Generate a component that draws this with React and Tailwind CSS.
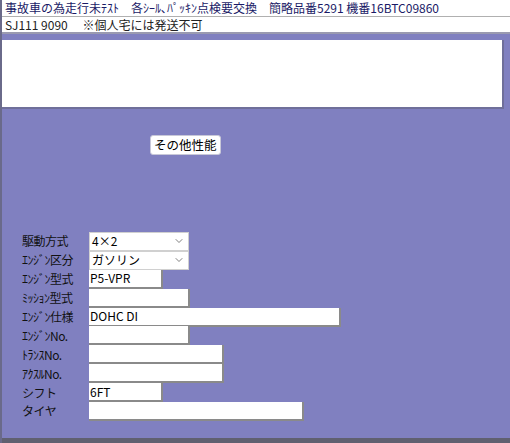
import React from "react";
import { ChevronDown } from "lucide-react";

const font = { fontFamily: '"MS Gothic", "Noto Sans CJK JP", sans-serif' };

const fields = [
  { label: "駆動方式", type: "select", value: "4×2", w: "w-[100px]" },
  { label: "ｴﾝｼﾞﾝ区分", type: "select", value: "ガソリン", w: "w-[100px]" },
  { label: "ｴﾝｼﾞﾝ型式", value: "P5-VPR", w: "w-[74px]" },
  { label: "ﾐｯｼｮﾝ型式", value: "", w: "w-[101px]" },
  { label: "ｴﾝｼﾞﾝ仕様", value: "DOHC DI", w: "w-[252px]" },
  { label: "ｴﾝｼﾞﾝNo.", value: "", w: "w-[101px]" },
  { label: "ﾄﾗﾝｽNo.", value: "", w: "w-[135px]" },
  { label: "ｱｸｽﾙNo.", value: "", w: "w-[135px]" },
  { label: "シフト", value: "6FT", w: "w-[74px]" },
  { label: "タイヤ", value: "", w: "w-[215px]" },
];

const App = () => {
  return (
    <div
      className="w-[510px] h-[443px] bg-[#8080c0] border-l-2 border-[#6a6a8a] text-[12px] flex flex-col overflow-hidden"
      style={font}
    >
      {/* ヘッダー */}
      <div className="bg-white">
        <div className="h-[17px] px-[3px] flex items-center text-[#1a1a66] border-b border-[#b0b0b0] whitespace-nowrap">
          事故車の為走行未ﾃｽﾄ　各ｼｰﾙ､ﾊﾟｯｷﾝ点検要交換　簡略品番5291 機番16BTC09860
        </div>
        <div className="h-[17px] px-[3px] flex items-center text-[#222] border-b-2 border-[#9a9ab0] whitespace-nowrap">
          SJ111 9090　 ※個人宅には発送不可
        </div>
      </div>

      {/* テキストエリア */}
      <div className="mt-[6px] mr-[6px] h-[69px] bg-white border-b-2 border-r-2 border-[#6f6f9a]"></div>

      {/* ボタン */}
      <div className="pl-[148px] mt-[26px]">
        <button className="h-[20px] px-[3px] bg-white rounded-[3px] border border-[#c8c8d8] text-[12.5px] text-black leading-none">
          その他性能
        </button>
      </div>

      {/* 項目 */}
      <div className="mt-[77px] flex flex-col">
        {fields.map((f) => (
          <div key={f.label} className="flex items-center h-[18.9px]">
            <div className="w-[87px] shrink-0 pl-[20px] text-[12px] text-[#111] whitespace-nowrap tracking-[-0.5px]">
              {f.label}
            </div>
            {f.type === "select" ? (
              <div
                className={`${f.w} shrink-0 h-[19px] bg-white border border-[#d0d0d0] flex items-center justify-between pl-[2px] pr-[3px] text-[12px] text-black`}
              >
                <span>{f.value}</span>
                <ChevronDown className="w-[12px] h-[12px] text-[#555]" strokeWidth={1.5} />
              </div>
            ) : (
              <div
                className={`${f.w} shrink-0 h-[19px] bg-white border-b-2 border-r-2 border-[#8a8a8a] flex items-center pl-[1px] text-[12px] text-black`}
              >
                {f.value}
              </div>
            )}
          </div>
        ))}
      </div>

      <div className="mt-auto h-[5px] bg-[#606070]"></div>
    </div>
  );
};

export default App;
